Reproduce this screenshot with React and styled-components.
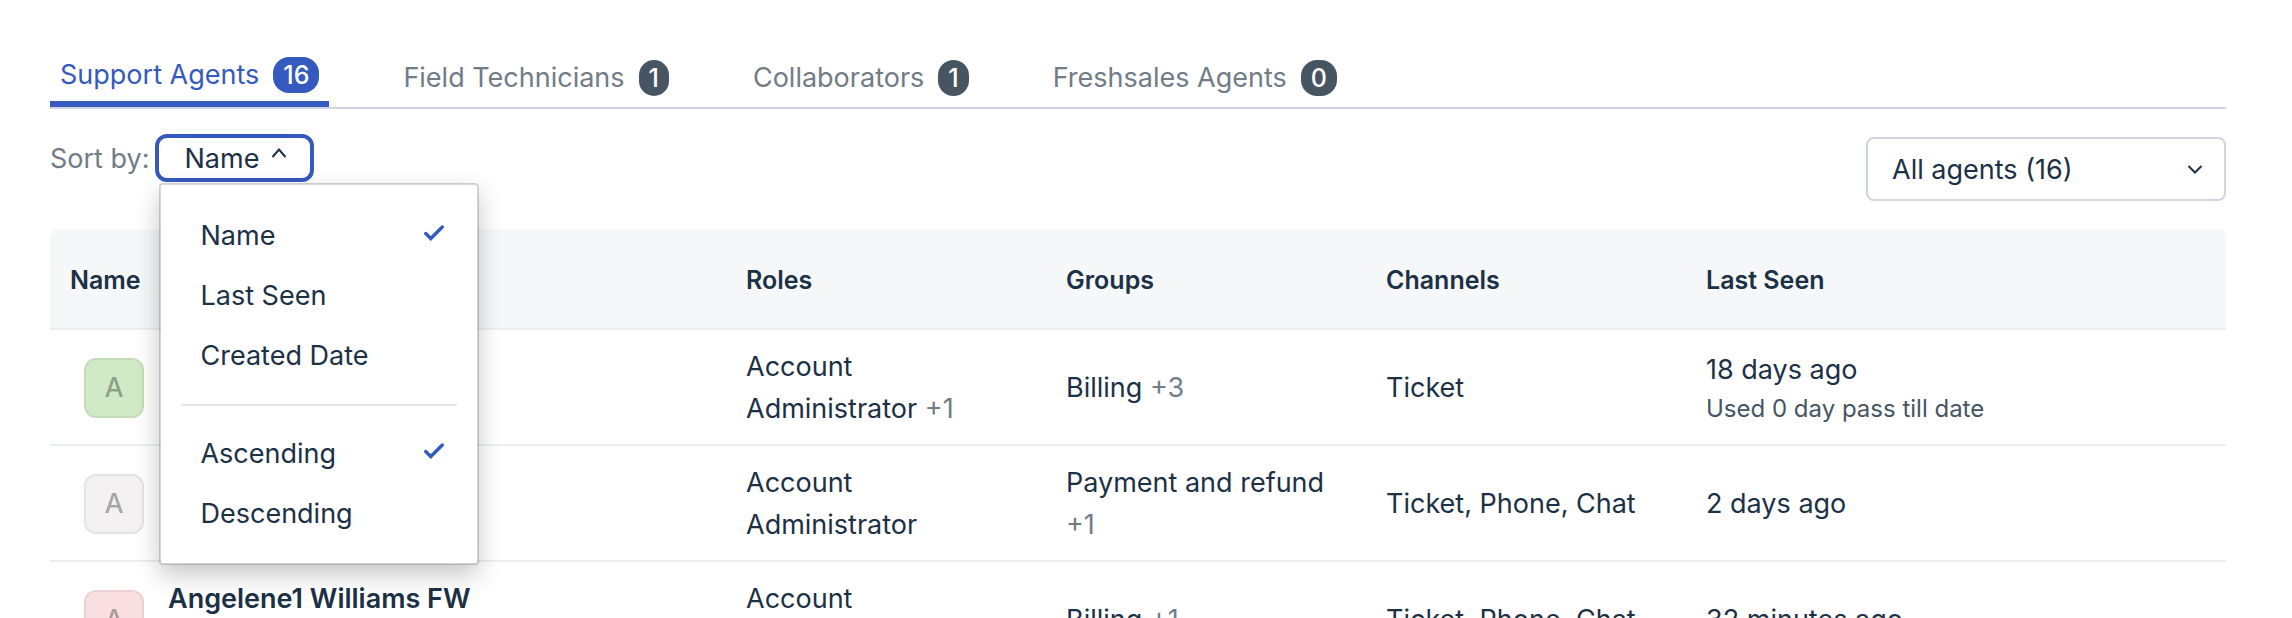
import React, { useState } from "react";
import styled, { createGlobalStyle, css } from "styled-components";

const color = {
  text: "#1c3146",
  muted: "#717c87",
  slate: "#475563",
  blue: "#355abf",
  line: "#ced5e0",
  rowLine: "#ebeef3",
  head: "#f5f7f9",
};

const GlobalStyle = createGlobalStyle`
  *, *::before, *::after { box-sizing: border-box; }
  body {
    margin: 0;
    background: #fff;
    color: ${color.text};
    font-family: Inter, "Liberation Sans", sans-serif;
    font-size: 27px;
    line-height: 42px;
  }
  button, select { font: inherit; color: inherit; }
`;

const Page = styled.main`
  height: 100vh;
  overflow: hidden;
  padding: 49px 66px 0 50px;
`;

const Tabs = styled.div`
  display: flex;
  gap: 64px;
  border-bottom: 2px solid ${color.line};
`;

const Badge = styled.span`
  height: 36px;
  padding: 0 10px;
  border-radius: 16px;
  background: ${color.slate};
  color: #fff;
  font-size: 25px;
  font-weight: 500;
  line-height: 36px;
`;

const Tab = styled.button`
  display: flex;
  align-items: center;
  gap: 14px;
  height: 58px;
  padding: 0 10px;
  border: 0;
  background: none;
  color: ${color.muted};
  white-space: nowrap;
  cursor: pointer;

  ${(p) =>
    p.$active &&
    css`
      border-bottom: 6px solid ${color.blue};
      color: ${color.blue};

      ${Badge} {
        background: ${color.blue};
      }
    `}
`;

const Toolbar = styled.div`
  display: flex;
  align-items: center;
  justify-content: space-between;
  min-height: 120px;
`;

const Sort = styled.div`
  align-self: flex-start;
  display: flex;
  align-items: center;
  gap: 6px;
  padding-top: 25px;
`;

const SortLabel = styled.span`
  padding-top: 2px;
  color: ${color.muted};
`;

const SortAnchor = styled.div`
  position: relative;
`;

const SortButton = styled.button`
  display: flex;
  align-items: flex-start;
  gap: 12px;
  height: 48px;
  padding: 0 23px 0 25px;
  border: 4px solid ${color.blue};
  border-radius: 12px;
  background: #fff;
  line-height: 42px;
  cursor: pointer;

  svg {
    margin-top: 9px;
  }
`;

const Menu = styled.div`
  position: absolute;
  z-index: 2;
  top: 49px;
  left: 4px;
  width: 320px;
  padding: 21px 20px 19px;
  border: 2px solid rgba(0, 0, 0, 0.16);
  border-radius: 4px;
  background: #fff;
  background-clip: padding-box;
  box-shadow: 0 10px 24px rgba(0, 0, 0, 0.22);
`;

const MenuItem = styled.button`
  display: flex;
  align-items: center;
  justify-content: space-between;
  width: 100%;
  height: 60px;
  padding: 0 12px 0 19px;
  border: 0;
  background: none;
  text-align: left;
  cursor: pointer;

  svg {
    margin-bottom: 6px;
  }
`;

const MenuDivider = styled.hr`
  height: 2px;
  margin: 18px 0;
  border: 0;
  background: #e4e4e4;
`;

const SelectBox = styled.label`
  position: relative;
  width: 360px;

  svg {
    position: absolute;
    top: 27px;
    right: 23px;
    pointer-events: none;
  }
`;

const Select = styled.select`
  display: block;
  width: 100%;
  height: 64px;
  padding: 2px 60px 0 24px;
  border: 2px solid ${color.line};
  border-radius: 8px;
  background: #fff;
  appearance: none;
`;

const Table = styled.table`
  width: 100%;
  table-layout: fixed;
  border-collapse: separate;
  border-spacing: 0;
`;

const Col = styled.col`
  width: ${(p) => p.$width};
`;

const HeadCell = styled.th`
  height: 101px;
  padding: 2px 20px 0;
  border-bottom: 2px solid ${color.rowLine};
  background: ${color.head};
  font-size: 25px;
  font-weight: 600;
  text-align: left;

  &:first-child {
    border-top-left-radius: 8px;
  }
  &:last-child {
    border-top-right-radius: 8px;
  }
`;

const Cell = styled.td`
  height: 116px;
  padding: 2px 20px 0;
  border-bottom: 2px solid ${color.rowLine};
`;

const Person = styled.div`
  display: flex;
  align-items: center;
  gap: 24px;
  padding-left: 14px;
`;

const Avatar = styled.span`
  flex: none;
  width: 60px;
  height: 60px;
  border: 2px solid rgba(0, 0, 0, 0.06);
  border-radius: 12px;
  background: ${(p) => p.$tint};
  color: rgba(0, 0, 0, 0.32);
  font-weight: 500;
  line-height: 56px;
  text-align: center;
`;

const PersonName = styled.div`
  min-height: 84px;
  font-weight: 600;
`;

const More = styled.span`
  color: ${color.muted};
`;

const Note = styled.div`
  color: ${color.slate};
  font-size: 24px;
  line-height: 36px;
  white-space: nowrap;
`;

const Chevron = ({ up }) => (
  <svg width="16" height="12" viewBox="0 0 16 12" fill="none" stroke={color.text} strokeWidth="2" aria-hidden="true">
    <path d={up ? "M1.5 10 8 2.5 14.5 10" : "M1.5 2 8 8.5 14.5 2"} />
  </svg>
);

const Check = () => (
  <svg width="22" height="18" viewBox="0 0 22 18" fill="none" stroke={color.blue} strokeWidth="3.4" strokeLinecap="round" aria-hidden="true">
    <path d="M2.7 9.5 7.8 14.5 19.3 3" />
  </svg>
);

const tabs = [
  ["Support Agents", 16],
  ["Field Technicians", 1],
  ["Collaborators", 1],
  ["Freshsales Agents", 0],
];

const agents = [
  { tint: "#d1eac6", name: "", role: "Account Administrator", roles: "+1", group: "Billing", groups: "+3", channels: "Ticket", seen: "18 days ago", note: "Used 0 day pass till date" },
  { tint: "#f3f1f2", name: "", role: "Account Administrator", group: "Payment and refund", groups: "+1", channels: "Ticket, Phone, Chat", seen: "2 days ago" },
  { tint: "#fadfe0", name: "Angelene1 Williams FW", role: "Account Administrator", group: "Billing", groups: "+1", channels: "Ticket, Phone, Chat", seen: "32 minutes ago" },
];

const columns = [
  ["Name", "auto"],
  ["Roles", "320px"],
  ["Groups", "320px"],
  ["Channels", "320px"],
  ["Last Seen", "540px"],
];

export default function App() {
  const [tab, setTab] = useState("Support Agents");
  const [open, setOpen] = useState(true);
  const [field, setField] = useState("Name");
  const [order, setOrder] = useState("Ascending");

  return (
    <>
      <GlobalStyle />
      <Page>
        <Tabs role="tablist">
          {tabs.map(([label, count]) => (
            <Tab key={label} role="tab" aria-selected={tab === label} $active={tab === label} onClick={() => setTab(label)}>
              {label}
              <Badge>{count}</Badge>
            </Tab>
          ))}
        </Tabs>

        <Toolbar>
          <Sort>
            <SortLabel id="sort-label">Sort by:</SortLabel>
            <SortAnchor>
              <SortButton id="sort-value" aria-labelledby="sort-label sort-value" aria-haspopup="menu" aria-expanded={open} onClick={() => setOpen(!open)}>
                {field}
                <Chevron up />
              </SortButton>
              {open && (
                <Menu role="menu" aria-labelledby="sort-label">
                  {["Name", "Last Seen", "Created Date"].map((item) => (
                    <MenuItem key={item} role="menuitemradio" aria-checked={field === item} onClick={() => setField(item)}>
                      {item}
                      {field === item && <Check />}
                    </MenuItem>
                  ))}
                  <MenuDivider />
                  {["Ascending", "Descending"].map((item) => (
                    <MenuItem key={item} role="menuitemradio" aria-checked={order === item} onClick={() => setOrder(item)}>
                      {item}
                      {order === item && <Check />}
                    </MenuItem>
                  ))}
                </Menu>
              )}
            </SortAnchor>
          </Sort>
          <SelectBox>
            <Select aria-label="Filter agents">
              <option>All agents (16)</option>
            </Select>
            <Chevron />
          </SelectBox>
        </Toolbar>

        <Table>
          <colgroup>
            {columns.map(([name, width]) => (
              <Col key={name} $width={width} />
            ))}
          </colgroup>
          <thead>
            <tr>
              {columns.map(([name]) => (
                <HeadCell key={name} scope="col">{name}</HeadCell>
              ))}
            </tr>
          </thead>
          <tbody>
            {agents.map((agent, i) => (
              <tr key={i}>
                <Cell>
                  <Person>
                    <Avatar $tint={agent.tint}>A</Avatar>
                    <PersonName>{agent.name}</PersonName>
                  </Person>
                </Cell>
                <Cell>
                  {agent.role} {agent.roles && <More>{agent.roles}</More>}
                </Cell>
                <Cell>
                  {agent.group} <More>{agent.groups}</More>
                </Cell>
                <Cell>{agent.channels}</Cell>
                <Cell>
                  {agent.seen}
                  {agent.note && <Note>{agent.note}</Note>}
                </Cell>
              </tr>
            ))}
          </tbody>
        </Table>
      </Page>
    </>
  );
}
